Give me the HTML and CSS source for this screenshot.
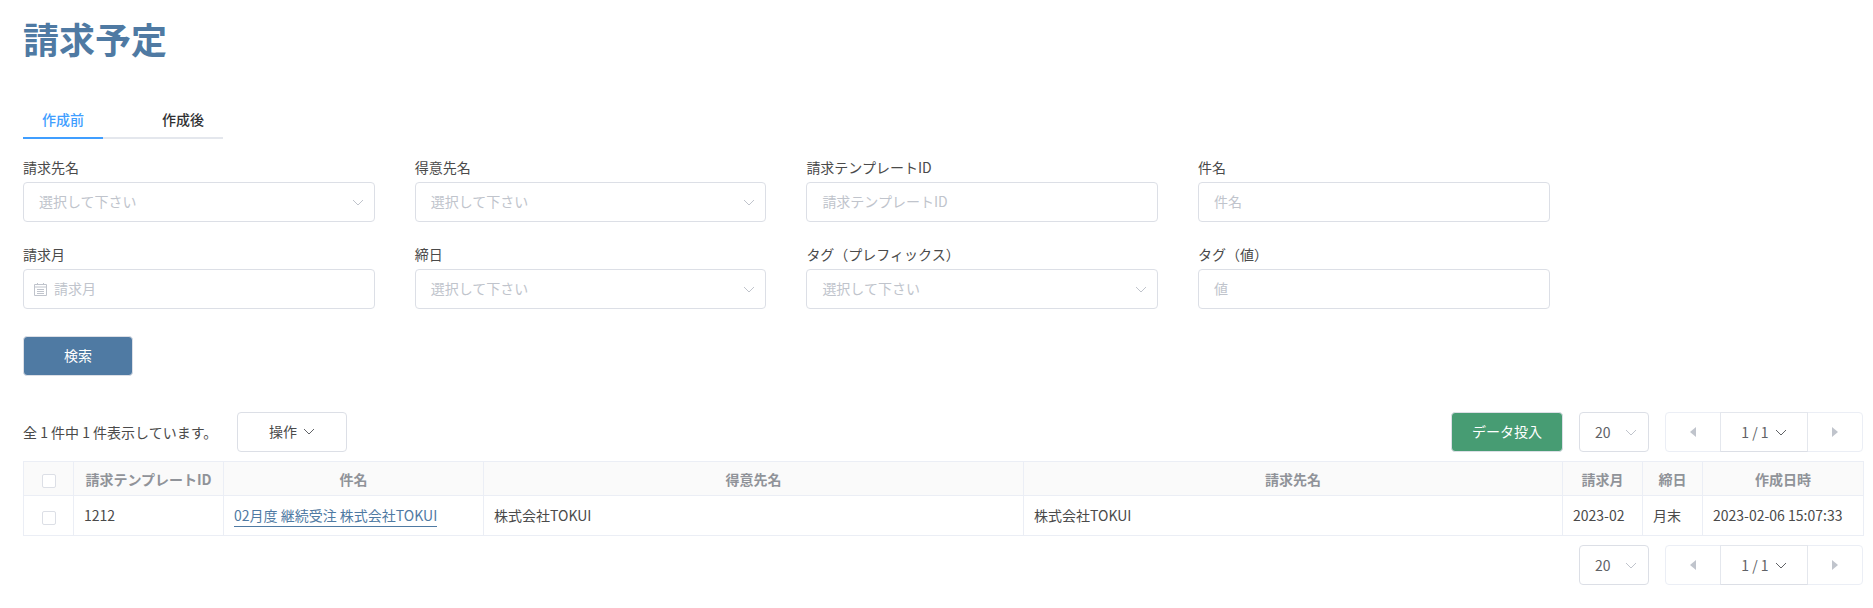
FILE: index.html
```html
<!DOCTYPE html>
<html lang="ja">
<head>
<meta charset="utf-8">
<title>請求予定</title>
<link rel="stylesheet" href="styles.css">
</head>
<body>
<main class="page">
  <h1 class="title">請求予定</h1>
  <div class="tabs">
    <div class="tab active">作成前</div>
    <div class="tab">作成後</div>
  </div>
  <form class="form">
    <div class="field">
      <label class="label">請求先名</label>
      <div class="control"><span class="ph">選択して下さい</span><svg class="chev" viewBox="0 0 12 7"><path d="M1 1l5 5 5-5"/></svg></div>
    </div>
    <div class="field">
      <label class="label">得意先名</label>
      <div class="control"><span class="ph">選択して下さい</span><svg class="chev" viewBox="0 0 12 7"><path d="M1 1l5 5 5-5"/></svg></div>
    </div>
    <div class="field">
      <label class="label">請求テンプレートID</label>
      <div class="control"><span class="ph">請求テンプレートID</span></div>
    </div>
    <div class="field">
      <label class="label">件名</label>
      <div class="control"><span class="ph">件名</span></div>
    </div>
    <div class="field">
      <label class="label">請求月</label>
      <div class="control date"><svg class="cal" viewBox="0 0 13 13"><path d="M.5 1.5h12v11H.5zM.5 4h12M3 6.5h7M3 8.5h7M3 10.5h7M3.5 0v2M9.5 0v2"/></svg><span class="ph">請求月</span></div>
    </div>
    <div class="field">
      <label class="label">締日</label>
      <div class="control"><span class="ph">選択して下さい</span><svg class="chev" viewBox="0 0 12 7"><path d="M1 1l5 5 5-5"/></svg></div>
    </div>
    <div class="field">
      <label class="label">タグ（プレフィックス）</label>
      <div class="control"><span class="ph">選択して下さい</span><svg class="chev" viewBox="0 0 12 7"><path d="M1 1l5 5 5-5"/></svg></div>
    </div>
    <div class="field">
      <label class="label">タグ（値）</label>
      <div class="control"><span class="ph">値</span></div>
    </div>
  </form>
  <button class="btn-search" type="button">検索</button>

  <div class="toolbar">
    <span class="count">全 1 件中 1 件表示しています。</span>
    <button class="btn-op" type="button">操作<svg class="chev-op" viewBox="0 0 12 7"><path d="M1 1l5 5 5-5"/></svg></button>
    <div class="right">
      <button class="btn-data" type="button">データ投入</button>
      <div class="size">20<svg class="chev" viewBox="0 0 12 7"><path d="M1 1l5 5 5-5"/></svg></div>
      <div class="pager">
        <span class="side"><svg class="tri" viewBox="0 0 6 10"><path d="M6 0v10L0 5z"/></svg></span>
        <span class="mid">1 / 1<svg class="chev-mid" viewBox="0 0 12 7"><path d="M1 1l5 5 5-5"/></svg></span>
        <span class="side"><svg class="tri" viewBox="0 0 6 10"><path d="M0 0v10l6-5z"/></svg></span>
      </div>
    </div>
  </div>

  <table class="grid">
    <colgroup>
      <col class="c-check"><col class="c-id"><col class="c-name"><col class="c-client"><col class="c-bill"><col class="c-month"><col class="c-close"><col class="c-created">
    </colgroup>
    <thead>
      <tr>
        <th><span class="check"></span></th>
        <th>請求テンプレートID</th>
        <th>件名</th>
        <th>得意先名</th>
        <th>請求先名</th>
        <th>請求月</th>
        <th>締日</th>
        <th>作成日時</th>
      </tr>
    </thead>
    <tbody>
      <tr>
        <td class="center"><span class="check"></span></td>
        <td>1212</td>
        <td><a class="link" href="#">02月度 継続受注 株式会社TOKUI</a></td>
        <td>株式会社TOKUI</td>
        <td>株式会社TOKUI</td>
        <td>2023-02</td>
        <td>月末</td>
        <td>2023-02-06 15:07:33</td>
      </tr>
    </tbody>
  </table>

  <div class="footer">
    <div class="size">20<svg class="chev" viewBox="0 0 12 7"><path d="M1 1l5 5 5-5"/></svg></div>
    <div class="pager">
      <span class="side"><svg class="tri" viewBox="0 0 6 10"><path d="M6 0v10L0 5z"/></svg></span>
      <span class="mid">1 / 1<svg class="chev-mid" viewBox="0 0 12 7"><path d="M1 1l5 5 5-5"/></svg></span>
      <span class="side"><svg class="tri" viewBox="0 0 6 10"><path d="M0 0v10l6-5z"/></svg></span>
    </div>
  </div>
</main>
</body>
</html>
```

FILE: styles.css
```css
* { box-sizing: border-box; }
html, body { margin: 0; padding: 0; background: #fff; }
body {
  font-family: "Noto Sans CJK JP", "Noto Sans", sans-serif;
  font-size: 14px;
  color: #4a4a4a;
}
svg { display: block; flex: none; }
.page { padding: 14px 10px 0 23px; }

.title {
  margin: 0;
  font-size: 36px;
  line-height: 48px;
  font-weight: 700;
  color: #4f7aa3;
}

.tabs {
  display: flex;
  width: 200px;
  margin-top: 41px;
  border-bottom: 2px solid #e4e7ed;
  height: 36px;
}
.tab {
  width: 80px;
  height: 36px;
  line-height: 32px;
  text-align: center;
  font-weight: 500;
  color: #303133;
}
.tab + .tab { margin-left: 40px; }
.tab.active {
  color: #409eff;
  border-bottom: 2px solid #409eff;
}

.form {
  display: grid;
  grid-template-columns: repeat(4, 351.7px);
  column-gap: 40px;
  row-gap: 22px;
  margin-top: 18px;
}
.label {
  display: block;
  line-height: 20px;
  margin-bottom: 5px;
  color: #4a4a4a;
}
.control {
  display: flex;
  align-items: center;
  justify-content: space-between;
  height: 40px;
  padding: 0 10px 0 15px;
  border: 1px solid #dcdfe6;
  border-radius: 4px;
  background: #fff;
}
.control.date { justify-content: flex-start; padding-left: 10px; gap: 7px; }
.ph { color: #c0c4cc; line-height: 36px; margin-bottom: 2px; }
.chev { width: 12px; height: 7px; fill: none; stroke: #c0c4cc; stroke-width: 1; }
.cal { width: 13px; height: 13px; fill: none; stroke: #c0c4cc; stroke-width: 1; }

.btn-search {
  display: block;
  width: 110px;
  height: 40px;
  margin-top: 27px;
  padding: 0 0 2px;
  border: 1px solid #dcdfe6;
  border-radius: 4px;
  background: #4f7aa3;
  color: #fff;
  font: inherit;
}

.toolbar {
  display: flex;
  align-items: center;
  height: 40px;
  margin-top: 36px;
}
.count { width: 214px; }
.btn-op {
  display: flex;
  align-items: center;
  justify-content: center;
  gap: 6px;
  width: 110px;
  height: 40px;
  padding: 0 0 2px;
  border: 1px solid #dcdfe6;
  border-radius: 4px;
  background: #fff;
  color: #4a4a4a;
  font: inherit;
}
.chev-op, .chev-mid { width: 12px; height: 7px; fill: none; stroke: #606266; stroke-width: 1; }
.right { display: flex; align-items: center; margin-left: auto; }
.btn-data {
  width: 112px;
  height: 40px;
  margin-right: 16px;
  padding: 0 0 2px;
  border: 1px solid #dcdfe6;
  border-radius: 4px;
  background: #479c73;
  color: #fff;
  font: inherit;
}
.size {
  display: flex;
  align-items: center;
  justify-content: space-between;
  width: 70px;
  height: 40px;
  padding: 0 11px 0 15px;
  border: 1px solid #dcdfe6;
  border-radius: 4px;
  background: #fff;
  color: #606266;
}
.pager {
  display: flex;
  width: 198px;
  height: 40px;
  margin-left: 16px;
  border: 1px solid #ebeef5;
  border-radius: 4px;
  background: #fff;
}
.side {
  display: flex;
  flex: 1;
  align-items: center;
  justify-content: center;
}
.tri { width: 6px; height: 10px; fill: #c0c4cc; }
.mid {
  display: flex;
  align-items: center;
  justify-content: center;
  gap: 6px;
  width: 88px;
  margin: -1px 0;
  border: 1px solid #e4e7ed;
  border-bottom-color: #dcdfe6;
  color: #606266;
}

.grid {
  width: 1840px;
  margin-top: 9px;
  table-layout: fixed;
  border-collapse: collapse;
}
.c-check { width: 50px; }
.c-id { width: 150px; }
.c-name { width: 260px; }
.c-client { width: 540px; }
.c-bill { width: 539px; }
.c-month { width: 80px; }
.c-close { width: 60px; }
.c-created { width: 161px; }
.grid th, .grid td {
  border: 1px solid #ebeef5;
  padding: 0 10px;
  white-space: nowrap;
}
.grid th {
  height: 34px;
  background: #fafafa;
  color: #909399;
  font-weight: 700;
  text-align: center;
}
.grid td { height: 40px; padding-bottom: 2px; color: #4a4a4a; }
.grid td.center { text-align: center; padding-bottom: 0; }
.check {
  display: inline-block;
  width: 14px;
  height: 14px;
  border: 1px solid #dcdfe6;
  border-radius: 2px;
  background: #fff;
  vertical-align: middle;
}
.link {
  color: #4f7aa3;
  text-decoration: none;
  border-bottom: 1px solid #4f7aa3;
  padding-bottom: 1px;
}

.footer {
  display: flex;
  justify-content: flex-end;
  margin-top: 9px;
}
```
